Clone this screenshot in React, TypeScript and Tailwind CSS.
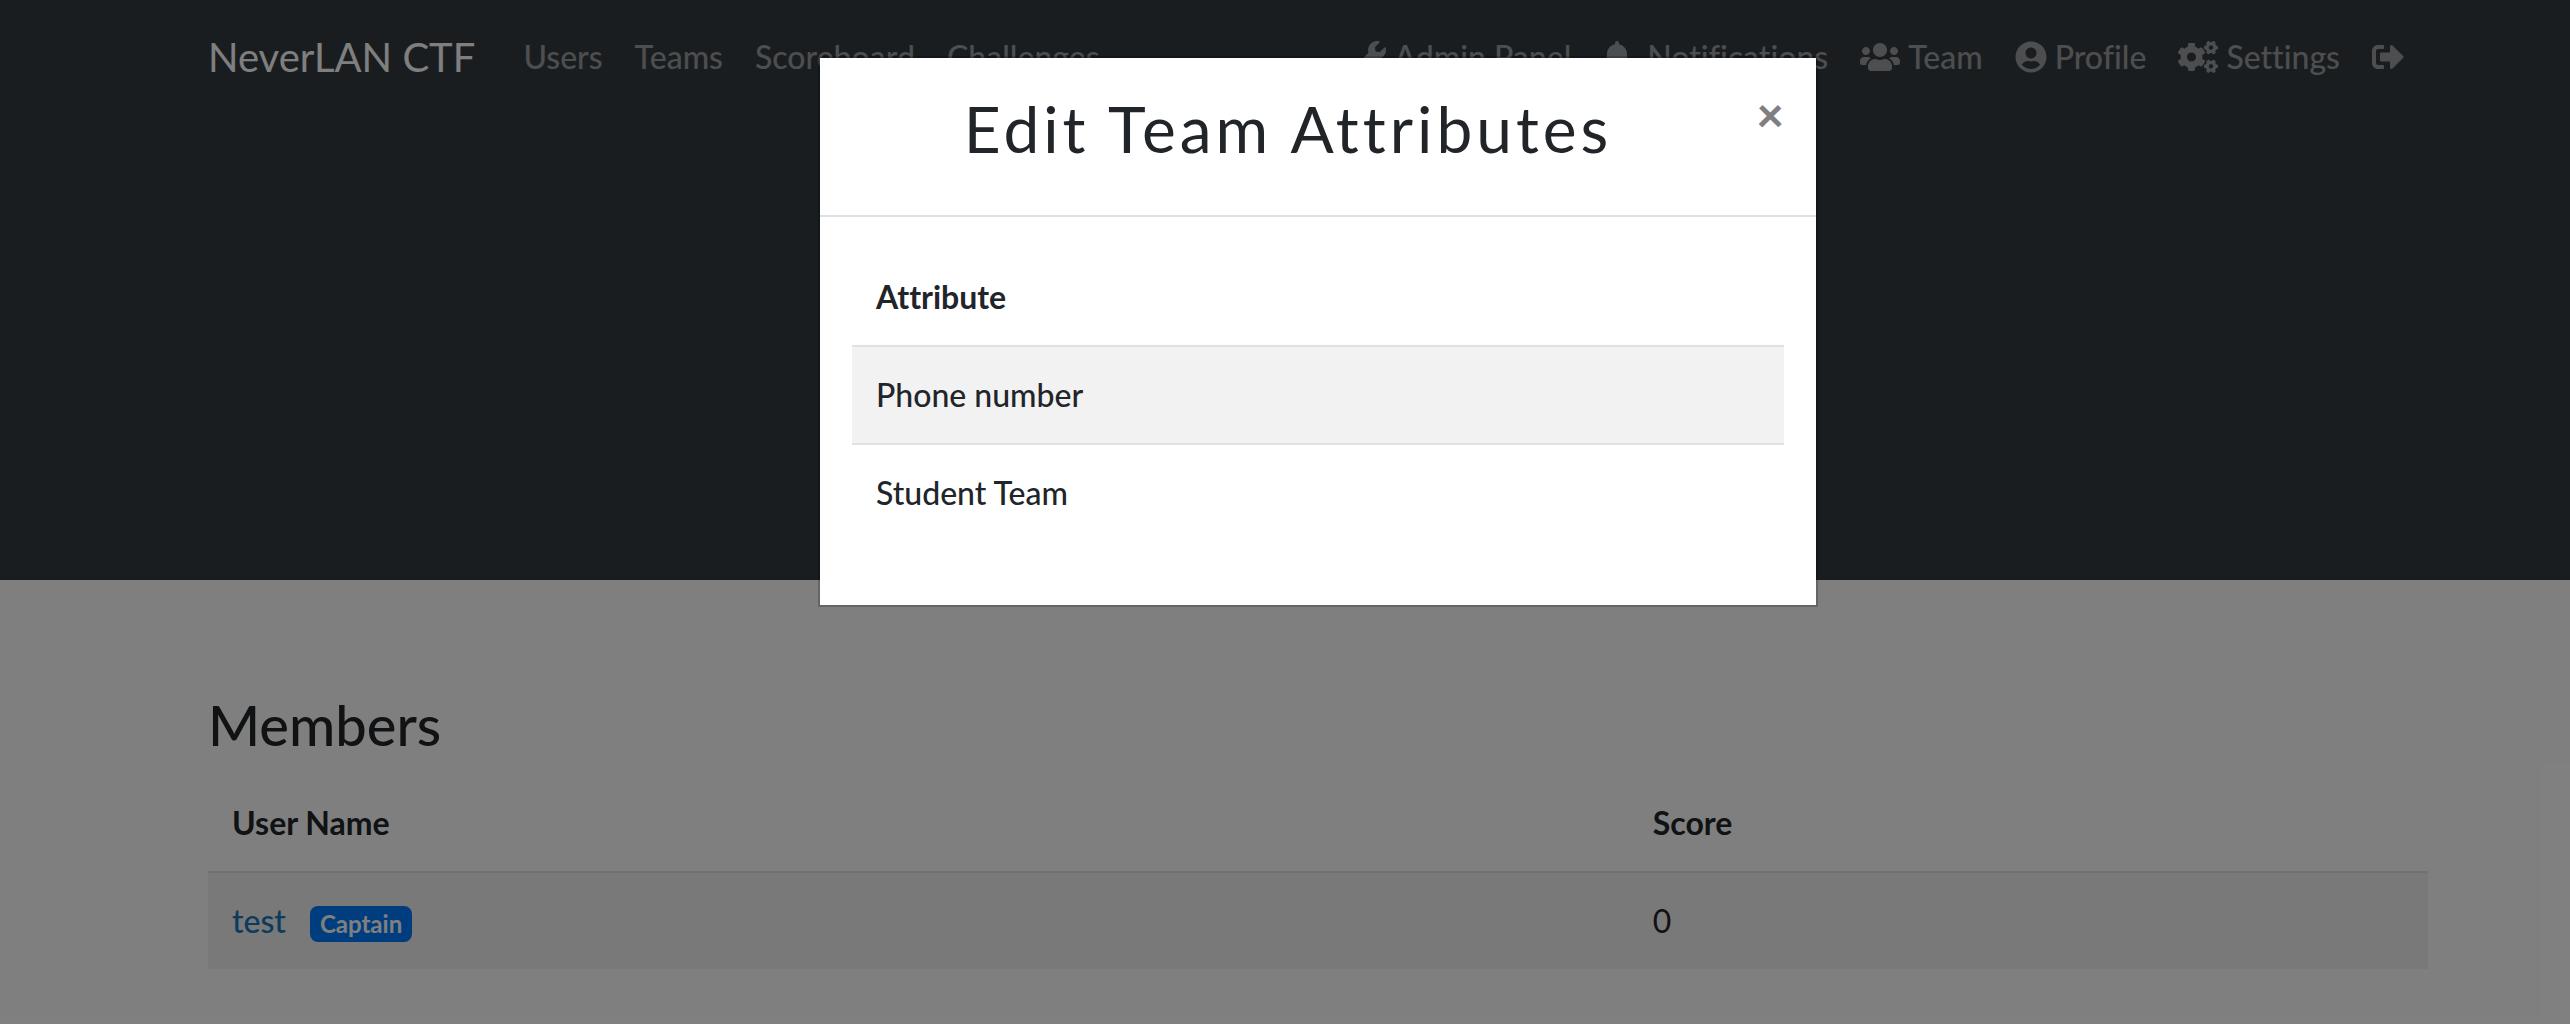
import React from "react";
import {
  FaWrench,
  FaBell,
  FaUsers,
  FaUserCircle,
  FaCogs,
  FaSignOutAlt,
} from "react-icons/fa";
import type { IconType } from "react-icons";

const primaryLinks = ["Users", "Teams", "Scoreboard", "Challenges"];

const accountLinks: { label: string; icon: IconType; iconClass: string }[] = [
  { label: "Admin Panel", icon: FaWrench, iconClass: "mr-2 h-8 w-8" },
  { label: "Notifications", icon: FaBell, iconClass: "mr-4 h-8 w-7" },
  { label: "Team", icon: FaUsers, iconClass: "mr-2 h-8 w-10" },
  { label: "Profile", icon: FaUserCircle, iconClass: "mr-2 h-8 w-8" },
  { label: "Settings", icon: FaCogs, iconClass: "mr-2 h-8 w-10" },
];

const attributes = ["Phone number", "Student Team"];

function Navbar() {
  return (
    <nav className="mx-auto flex max-w-[2280px] items-center px-[30px] pt-[17px] text-white/50">
      <a href="#home" className="mr-8 py-[10px] text-[40px] leading-[60px] text-white">
        NeverLAN CTF
      </a>
      <ul className="flex grow font-medium">
        {primaryLinks.map((label) => (
          <li key={label}>
            <a href={`#${label.toLowerCase()}`} className="block p-4">
              {label}
            </a>
          </li>
        ))}
      </ul>
      <ul className="flex pr-2 font-medium">
        {accountLinks.map(({ label, icon: Icon, iconClass }) => (
          <li key={label}>
            <a href={`#${label.toLowerCase().replace(" ", "-")}`} className="flex items-center p-4">
              <Icon className={iconClass} />
              {label}
            </a>
          </li>
        ))}
        <li>
          <a href="#logout" aria-label="Log out" className="flex h-20 items-center p-4">
            <FaSignOutAlt className="h-8 w-8" />
          </a>
        </li>
      </ul>
    </nav>
  );
}

function Members() {
  return (
    <main className="mx-auto max-w-[2280px] px-[30px] pt-[111px]">
      <h3 className="text-[56px] leading-[68px] font-medium">Members</h3>
      <table className="mt-4 w-full table-fixed text-left">
        <thead>
          <tr>
            <th className="w-[64%] p-6 font-bold">User Name</th>
            <th className="p-6 font-bold">Score</th>
          </tr>
        </thead>
        <tbody>
          <tr className="border-t-2 border-[#dee2e6] bg-black/5">
            <td className="p-6">
              <div className="flex items-baseline gap-6">
                <a href="#test" className="font-medium text-[#1779ba]">test</a>
                <span className="rounded-lg bg-[#007bff] px-[10px] text-2xl leading-9 font-bold text-white">
                  Captain
                </span>
              </div>
            </td>
            <td className="p-6">0</td>
          </tr>
        </tbody>
      </table>
    </main>
  );
}

function AttributesDialog() {
  return (
    <div className="absolute inset-0 bg-black/50 pt-14 pl-[66px]">
      <div
        role="dialog"
        aria-modal="true"
        aria-labelledby="dialog-title"
        className="mx-auto max-w-[1000px] border-2 border-black/20 bg-white bg-clip-padding"
      >
        <header className="relative border-b-2 border-[#dee2e6] pt-8 pr-[92px] pb-12 pl-8">
          <h2 id="dialog-title" className="text-center text-[64px] leading-[77px] font-normal tracking-[4px]">
            Edit Team Attributes
          </h2>
          <button type="button" aria-label="Close" className="absolute top-8 right-8 text-5xl leading-[48px] font-black text-black/50">
            ×
          </button>
        </header>
        <div className="px-8 pt-8 pb-16">
          <table className="w-full text-left">
            <thead>
              <tr>
                <th className="p-6 font-bold">Attribute</th>
              </tr>
            </thead>
            <tbody>
              {attributes.map((name) => (
                <tr key={name} className="border-t-2 border-[#dee2e6] odd:bg-black/5">
                  <td className="p-6 font-medium">{name}</td>
                </tr>
              ))}
            </tbody>
          </table>
        </div>
      </div>
    </div>
  );
}

export default function App() {
  return (
    <div className="relative min-h-screen overflow-hidden bg-white font-['Lato',sans-serif] text-[32px] leading-[48px] text-[#212529] [font-variant-ligatures:none]">
      <div className="min-h-[580px] bg-[#343a40] pl-[66px]">
        <Navbar />
      </div>
      <div className="pl-[66px]">
        <Members />
      </div>
      <AttributesDialog />
    </div>
  );
}
